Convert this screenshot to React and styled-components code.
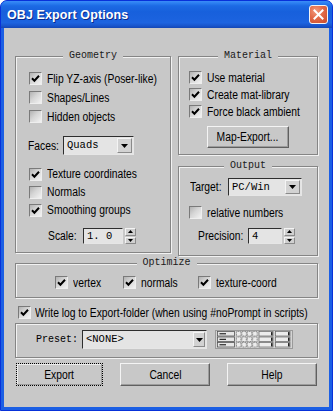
import React from 'react';
import styled, { createGlobalStyle } from 'styled-components';

const UI = '"Liberation Sans", Arial, sans-serif';
const MONO = '"Liberation Mono", "DejaVu Sans Mono", monospace';
const BG = '#c8c8c8';
const NARROW = 0.825;

const Global = createGlobalStyle`
  html, body { margin: 0; padding: 0; background: #ffffff; }
  body { width: 333px; height: 411px; overflow: hidden; }
  *, *::before, *::after { box-sizing: border-box; }
`;

const Window = styled.div`
  width: 333px;
  height: 411px;
  display: flex;
  flex-direction: column;
  background: #1b5fe4;
  border: 1px solid #0831d9;
  border-radius: 7px 7px 0 0;
  overflow: hidden;
`;

const TitleBar = styled.div`
  height: 27px;
  flex: none;
  display: flex;
  align-items: center;
  justify-content: space-between;
  padding: 0 4px 0 6px;
  background: linear-gradient(to bottom, #3a8cf8 0%, #2c7ff0 8%, #1c6ae4 18%, #1760dc 40%, #1a62de 65%, #1d64e0 80%, #1855cc 92%, #1447b4 100%);
`;

const TitleText = styled.span`
  font-family: ${UI};
  font-weight: bold;
  font-size: 12.5px;
  color: #ffffff;
  text-shadow: 1px 1px 0 #0b2a8a;
  letter-spacing: 0.1px;
`;

const CloseButton = styled.span`
  width: 19px;
  height: 19px;
  display: flex;
  align-items: center;
  justify-content: center;
  border: 1px solid #f4f4f4;
  border-radius: 3px;
  background: radial-gradient(circle at 35% 30%, #f29a7e 0%, #e26a48 45%, #c94a2a 100%);
`;

const Body = styled.div`
  flex: 1;
  margin: 0 3px 3px;
  background: ${BG};
  padding: 28px 11px 0;
  display: flex;
  flex-direction: column;
  color: #000;
  overflow: hidden;
`;

const TopRow = styled.div`
  display: grid;
  grid-template-columns: 156px 140px;
  column-gap: 7px;
  align-items: start;
`;

const RightColumn = styled.div`
  display: flex;
  flex-direction: column;
  gap: 11px;
`;

const Group = styled.div`
  position: relative;
  display: flex;
  flex-direction: column;
  border: 1px solid #858585;
  box-shadow: 1px 1px 0 #f2f2f2, inset 1px 1px 0 #f2f2f2;
  padding: ${(p) => p.$pad || '0'};
  margin-top: ${(p) => p.$mt || 0}px;
`;

const GroupTitle = styled.span`
  position: absolute;
  top: -7px;
  left: 50%;
  transform: translateX(-50%);
  padding: 0 6px;
  background: ${BG};
  font-family: ${MONO};
  font-size: 10px;
  line-height: 12px;
  color: #1a1a1a;
  white-space: nowrap;
`;

const Row = styled.div`
  display: flex;
  align-items: center;
  height: ${(p) => p.$h || 18}px;
  width: ${(p) => (p.$w ? `${p.$w}px` : 'auto')};
  gap: ${(p) => (p.$gap != null ? p.$gap : 5)}px;
  margin-top: ${(p) => p.$mt || 0}px;
  margin-left: ${(p) => p.$ml || 0}px;
  padding-left: ${(p) => p.$pl || 0}px;
  flex: none;
`;

/* the original UI font is a narrow sans; the installed Liberation Sans is drawn narrowed */
const Label = styled.span`
  display: inline-block;
  flex: none;
  width: ${(p) => (p.$w ? `${p.$w}px` : 'auto')};
  font-family: ${UI};
  font-size: 12.5px;
  line-height: 14px;
  color: #000;
  white-space: nowrap;
  transform: scaleX(${NARROW});
  transform-origin: left center;
`;

const MonoLabel = styled.span`
  font-family: ${MONO};
  font-size: 10px;
  line-height: 1;
  color: #000;
  white-space: nowrap;
  width: ${(p) => p.$w}px;
  flex: none;
`;

const Spacer = styled.span`
  width: ${(p) => p.$w}px;
  flex: none;
`;

const Box = styled.span`
  width: 13px;
  height: 13px;
  flex: none;
  display: inline-flex;
  align-items: center;
  justify-content: center;
  border: 1px solid;
  border-color: #7a7a7a #eeeeee #eeeeee #7a7a7a;
  background: linear-gradient(135deg, #b2b2b2 0%, #d6d6d6 45%, #f2f2f2 100%);
`;

function Check({ checked }) {
  return (
    <Box>
      {checked && (
        <svg width="9" height="9" viewBox="0 0 9 9">
          <path d="M1 4.3 L3.4 6.7 L8 1.8" stroke="#000" strokeWidth="2" fill="none" />
        </svg>
      )}
    </Box>
  );
}

function CheckRow({ checked, children, ...rest }) {
  return (
    <Row {...rest}>
      <Check checked={checked} />
      <Label>{children}</Label>
    </Row>
  );
}

const Field = styled.div`
  display: flex;
  align-items: center;
  width: ${(p) => p.$w}px;
  height: ${(p) => p.$h}px;
  flex: none;
  border: 1px solid;
  border-color: #2e2e2e #e6e6e6 #e6e6e6 #2e2e2e;
  background: #e4e4e4;
  padding-left: 3px;
`;

const FieldText = styled.span`
  flex: 1;
  font-family: ${MONO};
  font-size: 10.5px;
  line-height: 1;
  color: #000;
  white-space: pre;
`;

const ArrowButton = styled.span`
  width: ${(p) => p.$w || 14}px;
  align-self: stretch;
  margin: 1px;
  display: flex;
  align-items: center;
  justify-content: center;
  background: #d2d2d2;
  border: 1px solid;
  border-color: #f4f4f4 #8a8a8a #8a8a8a #f4f4f4;
`;

const Down = () => (
  <svg width="7" height="4" viewBox="0 0 7 4">
    <path d="M0 0 H7 L3.5 4 Z" fill="#000" />
  </svg>
);

function Dropdown({ w, h, value, arrowW }) {
  return (
    <Field $w={w} $h={h}>
      <FieldText>{value}</FieldText>
      <ArrowButton $w={arrowW}>
        <Down />
      </ArrowButton>
    </Field>
  );
}

const SpinWrap = styled.div`
  display: flex;
  align-items: stretch;
  height: 16px;
  gap: 2px;
  flex: none;
`;

const SpinArrows = styled.div`
  width: 11px;
  display: flex;
  flex-direction: column;
  gap: 1px;
`;

const SpinHalf = styled.span`
  flex: 1;
  display: flex;
  align-items: center;
  justify-content: center;
  background: #d0d0d0;
  border: 1px solid;
  border-color: #f4f4f4 #8a8a8a #8a8a8a #f4f4f4;
`;

function Spinner({ w, value }) {
  return (
    <SpinWrap>
      <Field $w={w} $h={16}>
        <FieldText>{value}</FieldText>
      </Field>
      <SpinArrows>
        <SpinHalf>
          <svg width="5" height="3" viewBox="0 0 5 3">
            <path d="M0 3 H5 L2.5 0 Z" fill="#000" />
          </svg>
        </SpinHalf>
        <SpinHalf>
          <svg width="5" height="3" viewBox="0 0 5 3">
            <path d="M0 0 H5 L2.5 3 Z" fill="#000" />
          </svg>
        </SpinHalf>
      </SpinArrows>
    </SpinWrap>
  );
}

const Button = styled.div`
  width: ${(p) => p.$w}px;
  height: ${(p) => p.$h || 23}px;
  flex: none;
  display: flex;
  align-items: center;
  justify-content: center;
  background: ${BG};
  border: 1px ${(p) => (p.$focus ? 'dotted' : 'solid')};
  border-color: ${(p) => (p.$focus ? '#000' : '#f4f4f4 #606060 #606060 #f4f4f4')};
  box-shadow: inset -1px -1px 0 #9c9c9c${(p) => (p.$focus ? ', inset 1px 1px 0 #ececec' : '')};
  align-self: ${(p) => p.$self || 'auto'};
  margin-top: ${(p) => p.$mt || 0}px;
`;

const ButtonText = styled.span`
  display: inline-block;
  font-family: ${UI};
  font-size: 12.5px;
  line-height: 14px;
  color: #000;
  white-space: nowrap;
  transform: scaleX(${NARROW});
`;

const ButtonRow = styled.div`
  display: flex;
  justify-content: space-between;
  margin: 5px 1px 0;
`;

const PresetIcon = () => (
  <svg width="78" height="19" viewBox="0 0 78 19">
    <rect x="0.5" y="0.5" width="77" height="18" fill="#d4d4d4" stroke="#9a9a9a" />
    {[0, 1, 2].map((i) => {
      const y = 1.5 + i * 5.5;
      return (
        <g key={i}>
          <rect x="2.5" y={y} width="17" height="4.5" fill="#e6e6e6" stroke="#555" strokeWidth="0.8" />
          <line x1="4.5" y1={y + 2.3} x2="11" y2={y + 2.3} stroke="#000" strokeWidth="1" />
          {[0, 1, 2, 3].map((k) => (
            <rect
              key={k}
              x={21.5 + k * 5.4}
              y={y}
              width="4.4"
              height="4.5"
              fill="#ececec"
              stroke="#666"
              strokeWidth="0.7"
              strokeDasharray="1 0.6"
            />
          ))}
          <rect x="44" y={y} width="14" height="4.5" fill="#ececec" stroke="#666" strokeWidth="0.7" />
          <rect x="56" y={y + 0.6} width="1.6" height="3.3" fill="#222" />
          <rect x="60.5" y={y} width="14.5" height="4.5" fill="#ececec" stroke="#666" strokeWidth="0.7" />
          <rect x="73" y={y + 0.6} width="1.6" height="3.3" fill="#222" />
        </g>
      );
    })}
  </svg>
);

export default function App() {
  return (
    <>
      <Global />
      <Window>
        <TitleBar>
          <TitleText>OBJ Export Options</TitleText>
          <CloseButton>
            <svg width="11" height="11" viewBox="0 0 11 11">
              <path d="M1.5 1.5 L9.5 9.5 M9.5 1.5 L1.5 9.5" stroke="#fff" strokeWidth="2" strokeLinecap="square" />
            </svg>
          </CloseButton>
        </TitleBar>
        <Body>
          <TopRow>
            <Group $pad="12px 0 8px 13px">
              <GroupTitle>Geometry</GroupTitle>
              <CheckRow $h={19} checked>Flip YZ-axis (Poser-like)</CheckRow>
              <CheckRow $h={19}>Shapes/Lines</CheckRow>
              <CheckRow $h={19}>Hidden objects</CheckRow>
              <Row $h={19} $mt={10} $gap={0} $ml={-1}>
                <Label $w={35}>Faces:</Label>
                <Dropdown w={71} h={19} value="Quads" arrowW={15} />
              </Row>
              <CheckRow $mt={10} checked>Texture coordinates</CheckRow>
              <CheckRow>Normals</CheckRow>
              <CheckRow checked>Smoothing groups</CheckRow>
              <Row $h={16} $mt={9} $pl={19} $gap={0}>
                <Label $w={35}>Scale:</Label>
                <Spinner w={40} value="1. 0" />
              </Row>
            </Group>
            <RightColumn>
              <Group $pad="12px 10px 6px 10px">
                <GroupTitle>Material</GroupTitle>
                <CheckRow $h={17} checked>Use material</CheckRow>
                <CheckRow $h={17} checked>Create mat-library</CheckRow>
                <CheckRow $h={17} checked>Force black ambient</CheckRow>
                <Button $w={82} $h={22} $mt={6} $self="center">
                  <ButtonText>Map-Export...</ButtonText>
                </Button>
              </Group>
              <Group $pad="11px 0 11px 11px">
                <GroupTitle>Output</GroupTitle>
                <Row $h={18} $gap={0}>
                  <Label $w={38}>Target:</Label>
                  <Dropdown w={74} h={18} value="PC/Win" arrowW={15} />
                </Row>
                <CheckRow $h={17} $mt={8} $ml={-1}>relative numbers</CheckRow>
                <Row $h={16} $mt={7} $pl={8} $gap={0}>
                  <Label $w={50}>Precision:</Label>
                  <Spinner w={34} value="4" />
                </Row>
              </Group>
            </RightColumn>
          </TopRow>

          <Group $mt={7} $pad="12px 0 8px 39px">
            <GroupTitle>Optimize</GroupTitle>
            <Row $h={13} $gap={0}>
              <CheckRow $h={13} $w={68} checked>vertex</CheckRow>
              <CheckRow $h={13} $w={75} checked>normals</CheckRow>
              <CheckRow $h={13} checked>texture-coord</CheckRow>
            </Row>
          </Group>

          <CheckRow $h={13} $mt={8} $pl={3} $gap={4} checked>
            Write log to Export-folder (when using #noPrompt in scripts)
          </CheckRow>

          <Group $mt={4} $pad="6px 0 8px 20px">
            <Row $h={19} $gap={0}>
              <MonoLabel $w={46}>Preset:</MonoLabel>
              <Dropdown w={125} h={19} value="<NONE>" arrowW={12} />
              <Spacer $w={8} />
              <PresetIcon />
            </Row>
          </Group>

          <ButtonRow>
            <Button $w={87} $focus>
              <ButtonText>Export</ButtonText>
            </Button>
            <Button $w={90}>
              <ButtonText>Cancel</ButtonText>
            </Button>
            <Button $w={90}>
              <ButtonText>Help</ButtonText>
            </Button>
          </ButtonRow>
        </Body>
      </Window>
    </>
  );
}
